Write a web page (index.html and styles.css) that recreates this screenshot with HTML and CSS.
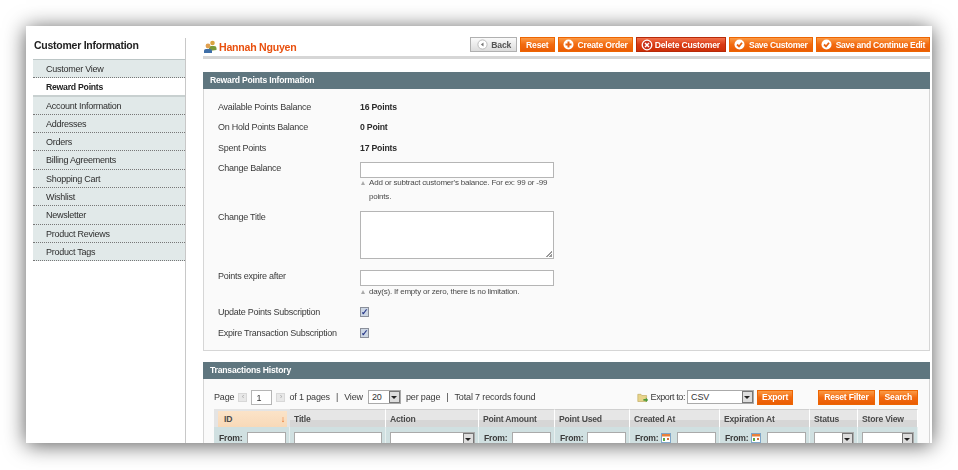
FILE: index.html
```html
<!DOCTYPE html>
<html>
	<head>
		<meta charset="UTF-8">
		<title>Hannah Nguyen</title>
		<link rel="stylesheet" href="styles.css">
	</head>
	<body>
		<div class="window">
			<!-- left menu -->
			<div class="side">
				<h3 class="side-title">Customer Information</h3>
				<ul class="tabs">
					<li>Customer View</li>
					<li class="active">Reward Points</li>
					<li>Account Information</li>
					<li>Addresses</li>
					<li>Orders</li>
					<li>Billing Agreements</li>
					<li>Shopping Cart</li>
					<li>Wishlist</li>
					<li>Newsletter</li>
					<li>Product Reviews</li>
					<li>Product Tags</li>
				</ul>
			</div>

			<div class="main">
				<!-- title and buttons -->
				<div class="head">
					<h3 class="name">
						<svg class="name-icon" width="14" height="14" viewBox="0 0 14 14">
							<circle cx="9.5" cy="3" r="2.3" fill="#d9a441"/>
							<path d="M6 11V7.5Q6 6 8 6H11Q13.5 6 13.5 8V10Z" fill="#7a9a3a"/>
							<circle cx="5" cy="6" r="2.4" fill="#e0a050"/>
							<path d="M1 13V10.5Q1 9 3 9H7Q9 9 9 10.5V13Z" fill="#3f6fa8"/>
						</svg>
						Hannah Nguyen
					</h3>
					<div class="btns">
						<button class="btn grey">
							<svg width="11" height="11" viewBox="0 0 11 11"><circle cx="5.5" cy="5.5" r="4.6" fill="#fff" stroke="#bbb"/><path d="M6.500 3.500V7.500L3.800 5.500Z" fill="#777"/></svg>
							Back
						</button>
						<button class="btn wide">Reset</button>
						<button class="btn">
							<svg width="11" height="11" viewBox="0 0 11 11"><circle cx="5.500" cy="5.500" r="5" fill="#fff"/><path d="M5.500 2.500V8.500M2.500 5.500H8.500" stroke="#e8620f" stroke-width="2"/></svg>
							Create Order
						</button>
						<button class="btn red">
							<svg width="12" height="12" viewBox="0 0 12 12"><circle cx="6" cy="6" r="4.800" fill="#c9301a" stroke="#fff" stroke-width="1.300"/><path d="M4 4L8 8M8 4L4 8" stroke="#fff" stroke-width="1.500"/></svg>
							Delete Customer
						</button>
						<button class="btn tight">
							<svg width="11" height="11" viewBox="0 0 11 11"><circle cx="5.500" cy="5.500" r="5" fill="#fff"/><path d="M3 5.500L5 7.500L8 3.800" fill="none" stroke="#e8620f" stroke-width="1.800"/></svg>
							Save Customer
						</button>
						<button class="btn tight">
							<svg width="11" height="11" viewBox="0 0 11 11"><circle cx="5.500" cy="5.500" r="5" fill="#fff"/><path d="M3 5.500L5 7.500L8 3.800" fill="none" stroke="#e8620f" stroke-width="1.800"/></svg>
							Save and Continue Edit
						</button>
					</div>
				</div>

				<!-- reward points form -->
				<div class="panel-head">Reward Points Information</div>
				<div class="panel form">
					<div class="row"><label>Available Points Balance</label><b>16 Points</b></div>
					<div class="row"><label>On Hold Points Balance</label><b>0 Point</b></div>
					<div class="row"><label>Spent Points</label><b>17 Points</b></div>
					<div class="row">
						<label>Change Balance</label>
						<div class="field">
							<div class="input"></div>
							<p class="note">Add or subtract customer's balance. For ex: 99 or -99 points.</p>
						</div>
					</div>
					<div class="row">
						<label>Change Title</label>
						<div class="field"><div class="input area"></div></div>
					</div>
					<div class="row">
						<label>Points expire after</label>
						<div class="field">
							<div class="input"></div>
							<p class="note one">day(s). If empty or zero, there is no limitation.</p>
						</div>
					</div>
					<div class="row check-row"><label>Update Points Subscription</label><span class="check">✓</span></div>
					<div class="row check-row"><label>Expire Transaction Subscription</label><span class="check">✓</span></div>
				</div>

				<!-- transactions -->
				<div class="panel-head">Transactions History</div>
				<div class="panel grid-box">
					<div class="pager">
						<span>Page</span>
						<span class="arrow">‹</span>
						<span class="page-input">1</span>
						<span class="arrow">›</span>
						<span>of 1 pages</span>
						<span class="sep">|</span>
						<span>View</span>
						<span class="select view-sel">20<i class="drop"></i></span>
						<span>per page</span>
						<span class="sep">|</span>
						<span>Total 7 records found</span>
						<span class="export">
							<svg width="12" height="13" viewBox="0 0 15 14"><path d="M1 3H5L6 4.500H12V12H1Z" fill="#e8d48a" stroke="#b8a050" stroke-width=".7"/><path d="M8 9H11V7L14 10L11 13V11H8Z" fill="#4c9a3a"/></svg>
							<span class="export-label">Export to:</span>
							<span class="select csv-sel">CSV<i class="drop"></i></span>
							<button class="btn">Export</button>
						</span>
						<button class="btn wide">Reset Filter</button>
						<button class="btn wide">Search</button>
					</div>
					<table class="grid">
						<colgroup>
							<col class="c1"><col class="c2"><col class="c3"><col class="c4"><col class="c5"><col class="c6"><col class="c7"><col class="c8"><col class="c9">
						</colgroup>
						<tr>
							<th class="sorted">ID<span class="sort">↓</span></th>
							<th>Title</th>
							<th>Action</th>
							<th>Point Amount</th>
							<th>Point Used</th>
							<th>Created At</th>
							<th>Expiration At</th>
							<th>Status</th>
							<th>Store View</th>
						</tr>
						<tr class="filter">
							<td><span class="from">From:<span class="box"></span></span></td>
							<td><span class="box full"></span></td>
							<td><span class="box full"><i class="drop"></i></span></td>
							<td><span class="from">From:<span class="box"></span></span></td>
							<td><span class="from">From:<span class="box"></span></span></td>
							<td><span class="from">From:<svg class="cal" width="10" height="10" viewBox="0 0 10 10"><rect x=".5" y=".5" width="9" height="9" fill="#fff" stroke="#7fa6c8"/><rect x="1" y="1" width="8" height="2.500" fill="#e8803a"/><rect x="2" y="5" width="2" height="3" fill="#5aa84a"/><rect x="6" y="5" width="2" height="2" fill="#d9703a"/></svg><span class="box"></span></span></td>
							<td><span class="from">From:<svg class="cal" width="10" height="10" viewBox="0 0 10 10"><rect x=".5" y=".5" width="9" height="9" fill="#fff" stroke="#7fa6c8"/><rect x="1" y="1" width="8" height="2.500" fill="#e8803a"/><rect x="2" y="5" width="2" height="3" fill="#5aa84a"/><rect x="6" y="5" width="2" height="2" fill="#d9703a"/></svg><span class="box"></span></span></td>
							<td><span class="box full"><i class="drop"></i></span></td>
							<td><span class="box full"><i class="drop"></i></span></td>
						</tr>
					</table>
				</div>
			</div>
		</div>
	</body>
</html>
```

FILE: styles.css
```css
*{
	margin: 0;
	padding: 0;
	box-sizing: border-box;
}

body{
	background-color: #fff;
	font-family: "Liberation Sans", Arial, sans-serif;
	font-size: 9px;
	letter-spacing: -.25px;
	color: #3a3a3a;
	height: 470px;
	overflow: hidden;
	padding: 26px 26px 0;
}

/* the captured window with its drop shadow */
.window{
	width: 906px;
	height: 417px;
	background-color: #fff;
	box-shadow: 0 2px 20px rgba(0,0,0,.65);
	overflow: hidden;
	display: flex;
	padding: 11px 2px 0 7px;
	filter: blur(.3px);
}

/* left menu */
.side{
	width: 153px;
	flex-shrink: 0;
	border-right: 1px solid #c8c8c8;
	height: 405px;
	margin-top: 1px;
}

.side-title{
	font-size: 10.5px;
	color: #222;
	height: 21px;
	line-height: 14px;
	padding-left: 1px;
}

.tabs{
	list-style: none;
	border-top: 1px solid #bcc6c6;
}

.tabs li{
	height: 18.3px;
	line-height: 18px;
	padding-left: 13px;
	background-color: #e1e9e9;
	border-bottom: 1px dotted #777;
	color: #2e2e2e;
}

.tabs li.active{
	background-color: #fff;
	border-bottom: 2px solid #c8d0d0;
	font-weight: bold;
	font-size: 8.7px;
	color: #222;
}

/* right side */
.main{
	margin-left: 17px;
	flex: 1;
	min-width: 0;
}

.head{
	height: 22px;
	border-bottom: 3px solid #d6d6d6;
	display: flex;
	justify-content: space-between;
	margin-bottom: 13px;
}

.name{
	font-size: 10.6px;
	height: 18px;
	padding-top: 2px;
	color: #e9510f;
	display: flex;
	align-items: center;
	gap: 2px;
}

.btns{
	display: flex;
	gap: 3px;
	height: 15px;
}

.btn{
	height: 15px;
	border: 1px solid #ed6502;
	background-color: #f4680f;
	background-image: linear-gradient(#fb9a45, #f26a10 50%, #ea5c04);
	color: #fff;
	font-family: "Liberation Sans", Arial, sans-serif;
	font-size: 8.6px;
	letter-spacing: -.2px;
	font-weight: bold;
	padding: 0 4px;
	display: inline-flex;
	align-items: center;
	gap: 4px;
	white-space: nowrap;
}

.btn.wide{
	padding: 0 5px;
}

.btn.tight{
	letter-spacing: -.3px;
}

.btn.grey{
	background-image: linear-gradient(#fafafa, #dcdcdc);
	border-color: #b0b0b0;
	color: #555;
	padding: 0 5px 0 6px;
	gap: 3px;
}

.btn.red{
	background-image: linear-gradient(#f0704a, #d93a14 50%, #cc2f08);
	border-color: #b82a08;
	gap: 2px;
	padding: 0 5px 0 4px;
}

.panel-head{
	height: 17px;
	line-height: 17px;
	background-color: #5f767f;
	color: #fff;
	font-weight: bold;
	font-size: 8.6px;
	letter-spacing: -.2px;
	padding-left: 7px;
}

.panel{
	background-color: #fafafa;
	border: 1px solid #d6d6d6;
	border-top: 0;
}

/* form */
.form{
	height: 262px;
	padding-top: 9px;
	margin-bottom: 11px;
}

.row{
	display: flex;
	min-height: 20.4px;
	padding: 3px 0 0 14px;
	line-height: 12px;
}

.row label{
	width: 142px;
	flex-shrink: 0;
}

.row b{
	font-size: 8.7px;
	letter-spacing: -.2px;
	color: #2a2a2a;
}

.input{
	width: 194px;
	height: 16px;
	background-color: #fff;
	border: 1px solid #b5b5b5;
}

.input.area{
	height: 48px;
	margin-bottom: 8px;
	position: relative;
}

/* resize grip of the textarea */
.input.area:after{
	content: "";
	position: absolute;
	right: 1px;
	bottom: 1px;
	width: 6px;
	height: 6px;
	background-image: linear-gradient(135deg, transparent 50%, #999 50%, #999 62%, transparent 62%, transparent 75%, #999 75%);
}

.field{
	width: 194px;
}

.note{
	font-size: 8px;
	letter-spacing: -.2px;
	line-height: 14px;
	padding: 0 4px 0 9px;
	margin-top: -2px;
	margin-bottom: 4px;
	position: relative;
	color: #4a4a4a;
}

.note.one{
	margin-top: -1px;
}

.note:before{
	content: "";
	position: absolute;
	left: 1px;
	top: 5px;
	border-left: 2.500px solid transparent;
	border-right: 2.500px solid transparent;
	border-bottom: 4px solid #aaa;
}

.check-row{
	align-items: flex-start;
}

.check{
	width: 9px;
	height: 10px;
	margin-top: 1px;
	background-color: #ccd6e4;
	border: 1px solid #8a8f9a;
	color: #2a3a8a;
	font-size: 9px;
	line-height: 8px;
	font-weight: bold;
	text-align: center;
}

/* transactions */
.grid-box{
	height: 70px;
	padding: 10px 11px 0 10px;
	border-bottom: 0;
}

.pager{
	display: flex;
	align-items: center;
	gap: 4px;
	height: 16px;
	font-size: 9px;
	letter-spacing: -.15px;
	white-space: nowrap;
	margin-bottom: 4px;
}

.arrow{
	width: 9px;
	height: 9px;
	background-color: #e8e8e8;
	border: 1px solid #d8d8d8;
	color: #aaa;
	font-size: 8px;
	line-height: 6px;
	text-align: center;
}

.page-input{
	width: 21px;
	height: 15px;
	line-height: 15px;
	padding-left: 4px;
	background-color: #fff;
	border: 1px solid #b5b5b5;
	color: #333;
}

.sep{
	margin: 0 2px;
}

.select{
	position: relative;
	height: 14px;
	line-height: 13px;
	padding-left: 3px;
	background-color: #fff;
	border: 1px solid #aaa;
	color: #333;
	margin: 0 1px;
}

.view-sel{
	width: 33px;
}

.csv-sel{
	width: 67px;
	margin: 0;
}

.drop{
	position: absolute;
	right: 0;
	top: 0;
	bottom: 0;
	width: 11px;
	background-color: #ddd;
	border: 1px solid #777;
}

.drop:after{
	content: "";
	position: absolute;
	left: 1px;
	top: 4px;
	border-left: 3px solid transparent;
	border-right: 3px solid transparent;
	border-top: 3px solid #222;
}

.export{
	display: inline-flex;
	align-items: center;
	gap: 2px;
	margin-left: auto;
	margin-right: 21px;
}

.export-label{
	letter-spacing: -.4px;
}

.export .btn{
	margin-left: 1px;
}

.grid{
	width: 704px;
	table-layout: fixed;
	border-collapse: separate;
	border-spacing: 0;
}

.c1{width: 76px;}
.c2{width: 96px;}
.c3{width: 93px;}
.c4{width: 76px;}
.c5{width: 75px;}
.c6{width: 90px;}
.c7{width: 90px;}
.c8{width: 48px;}
.c9{width: 60px;}

.grid th{
	height: 18px;
	text-align: left;
	padding-left: 4px;
	font-size: 8.6px;
	letter-spacing: -.2px;
	color: #4a4a4a;
	background-image: linear-gradient(#e6e6e6 60%, #d6d6d6 60%);
	border-right: 1px solid #fff;
	border-top: 1px solid #d0d0d0;
}

.grid th.sorted{
	background-image: linear-gradient(#fbe3c8, #f8d9b8);
	background-clip: padding-box;
	background-color: #e4e4e4;
	border-left: 4px solid #e4e4e4;
	border-right: 3px solid #e4e4e4;
	border-top: 2px solid #e4e4e4;
	padding-left: 6px;
	position: relative;
}

.sort{
	position: absolute;
	right: 2px;
	top: 3px;
	color: #e8620f;
	font-size: 9px;
}

.filter td{
	background-color: #d0e0e1;
	height: 30px;
	vertical-align: top;
	padding: 5px 3px 0 4px;
	border-right: 1px solid #e8f0f0;
	font-weight: bold;
	font-size: 8.6px;
	letter-spacing: -.2px;
	color: #3a3a3a;
}

.from{
	display: flex;
	align-items: flex-start;
	gap: 3px;
	line-height: 12px;
	padding-left: 1px;
}

.box{
	display: block;
	position: relative;
	height: 16px;
	background-color: #fff;
	border: 1px solid #aaa;
	margin-left: auto;
	width: 39px;
}

.box.full{
	width: 100%;
	margin: 0;
}

.cal{
	flex-shrink: 0;
	margin-top: 1px;
}
```
